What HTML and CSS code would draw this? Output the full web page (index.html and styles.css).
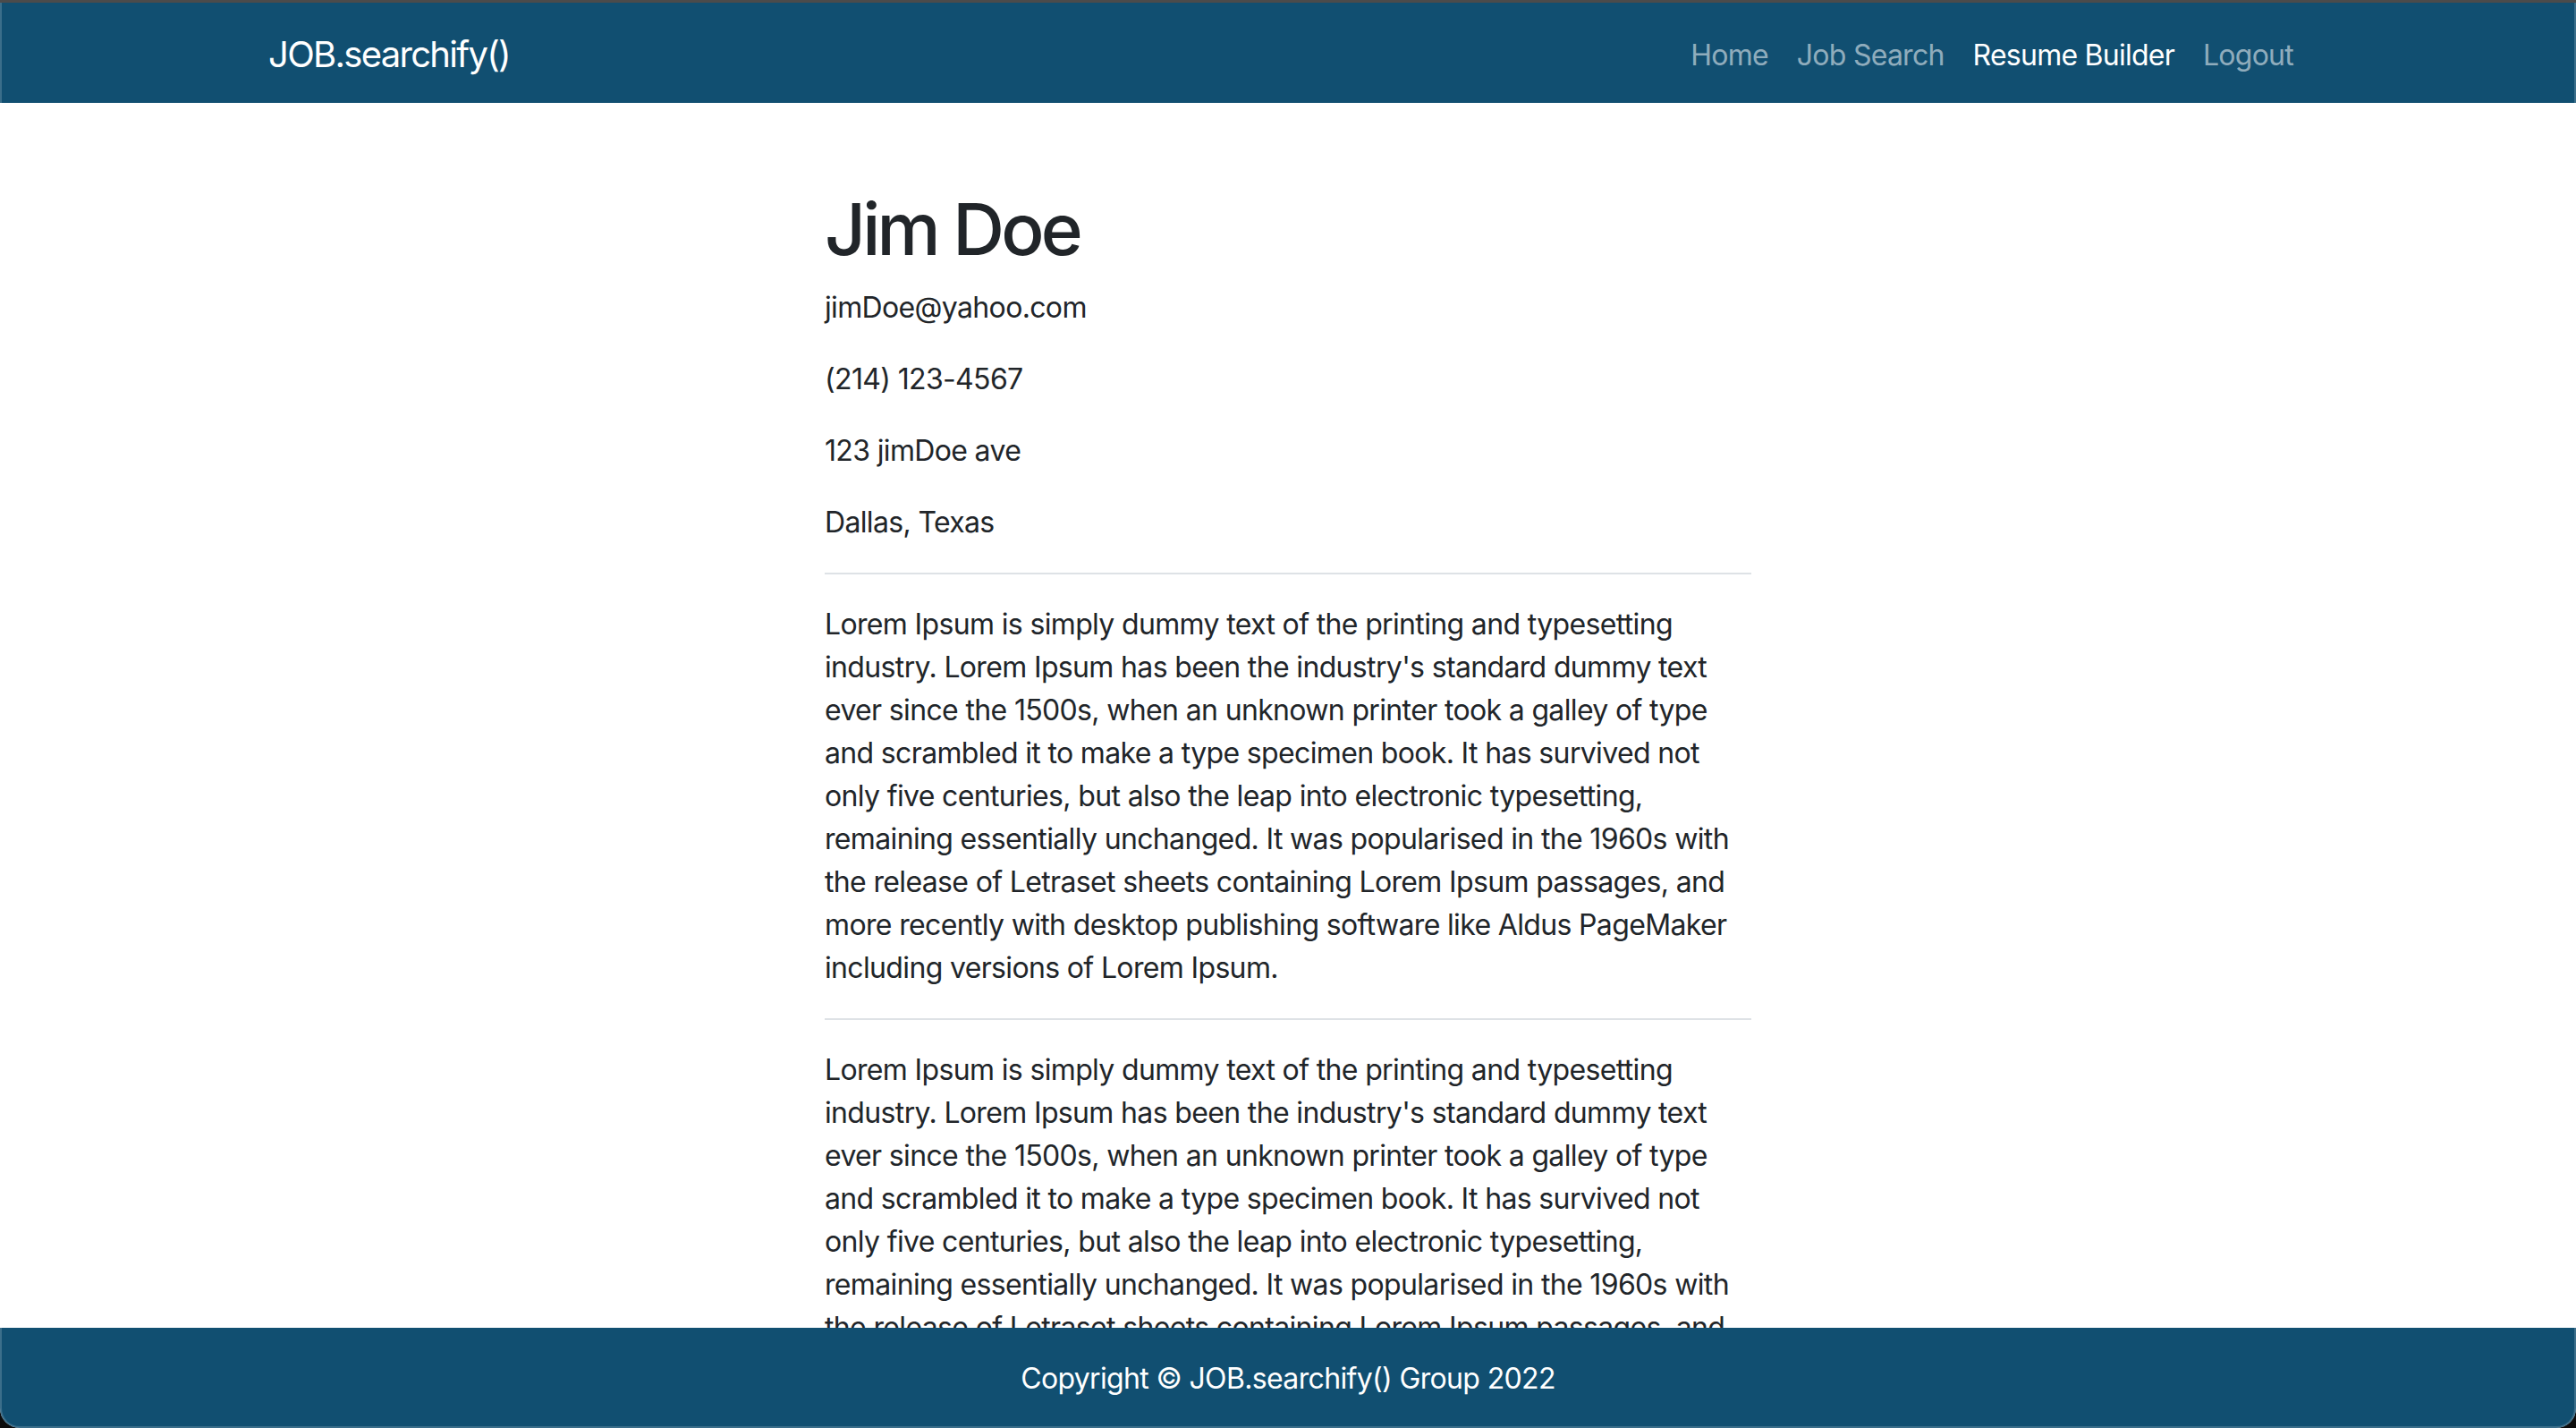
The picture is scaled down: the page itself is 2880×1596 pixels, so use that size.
FILE: index.html
```html
<!DOCTYPE html>
<html lang="en">
<head>
<meta charset="utf-8">
<title>JOB.searchify() - Resume</title>
<link rel="stylesheet" href="styles.css">
</head>
<body>
<div class="window">
  <nav class="navbar">
    <div class="nav-inner">
      <a class="brand" href="#">JOB.searchify()</a>
      <ul class="nav-links">
        <li><a class="nav-link" href="#">Home</a></li>
        <li><a class="nav-link" href="#">Job Search</a></li>
        <li><a class="nav-link active" href="#">Resume Builder</a></li>
        <li><a class="nav-link" href="#">Logout</a></li>
      </ul>
    </div>
  </nav>
  <main class="content">
    <div class="resume">
      <h1 class="name">Jim Doe</h1>
      <p>jimDoe@yahoo.com</p>
      <p>(214) 123-4567</p>
      <p>123 jimDoe ave</p>
      <p>Dallas, Texas</p>
      <hr class="divider">
      <p>Lorem Ipsum is simply dummy text of the printing and typesetting industry. Lorem Ipsum has been the industry's standard dummy text ever since the 1500s, when an unknown printer took a galley of type and scrambled it to make a type specimen book. It has survived not only five centuries, but also the leap into electronic typesetting, remaining essentially unchanged. It was popularised in the 1960s with the release of Letraset sheets containing Lorem Ipsum passages, and more recently with desktop publishing software like Aldus PageMaker including versions of Lorem Ipsum.</p>
      <hr class="divider">
      <p>Lorem Ipsum is simply dummy text of the printing and typesetting industry. Lorem Ipsum has been the industry's standard dummy text ever since the 1500s, when an unknown printer took a galley of type and scrambled it to make a type specimen book. It has survived not only five centuries, but also the leap into electronic typesetting, remaining essentially unchanged. It was popularised in the 1960s with the release of Letraset sheets containing Lorem Ipsum passages, and more recently with desktop publishing software like Aldus PageMaker including versions of Lorem Ipsum.</p>
    </div>
  </main>
  <footer class="footer">Copyright © JOB.searchify() Group 2022</footer>
</div>
</body>
</html>
```
FILE: styles.css
```css
* { box-sizing: border-box; }
html, body {
  margin: 0;
  padding: 0;
  height: 100%;
  background: #0c0c0c;
}
body {
  font-family: "Inter", "Noto Sans", sans-serif;
  font-size: 32px;
  line-height: 48px;
  color: #212529;
}
.window {
  position: relative;
  height: 1596px;
  display: flex;
  flex-direction: column;
  background: #ffffff;
  border-top: 3px solid #4b4b4b;
  border-radius: 0 0 22px 22px;
  overflow: hidden;
}
.window::after {
  content: "";
  position: absolute;
  inset: 0;
  border: 2px solid rgba(255, 255, 255, 0.18);
  border-top: 0;
  border-radius: 0 0 22px 22px;
  pointer-events: none;
}
.navbar {
  background: #114f71;
  padding: 16px 0;
  flex: none;
}
.nav-inner {
  width: 2280px;
  margin: 0 auto;
  display: flex;
  align-items: center;
  justify-content: space-between;
}
.brand {
  color: #ffffff;
  text-decoration: none;
  font-size: 40px;
  line-height: 60px;
  padding: 12px 0 8px;
  letter-spacing: -1.7px;
}
.nav-links {
  list-style: none;
  margin: 0;
  padding: 0;
  display: flex;
}
.nav-link {
  display: block;
  padding: 19px 16px 13px;
  color: rgba(255, 255, 255, 0.55);
  text-decoration: none;
  font-size: 32px;
  line-height: 48px;
  letter-spacing: -0.75px;
}
.nav-link.active { color: #ffffff; }
.content {
  flex: 1;
  overflow: hidden;
}
.resume {
  width: 1036px;
  margin: 0 auto;
  padding-top: 93px;
}
.name {
  margin: 0 0 16px;
  font-size: 80px;
  line-height: 96px;
  font-weight: 500;
  letter-spacing: -3.8px;
}
.resume p {
  margin: 0 0 32px;
  letter-spacing: -0.65px;
}
.divider {
  margin: 32px 0;
  border: 0;
  border-top: 2px solid #dee2e6;
  height: 0;
}
.footer {
  flex: none;
  height: 112px;
  background: #114f71;
  color: #ffffff;
  display: flex;
  align-items: center;
  justify-content: center;
  font-size: 32px;
  line-height: 48px;
  letter-spacing: -0.65px;
  padding-top: 2px;
}
```
